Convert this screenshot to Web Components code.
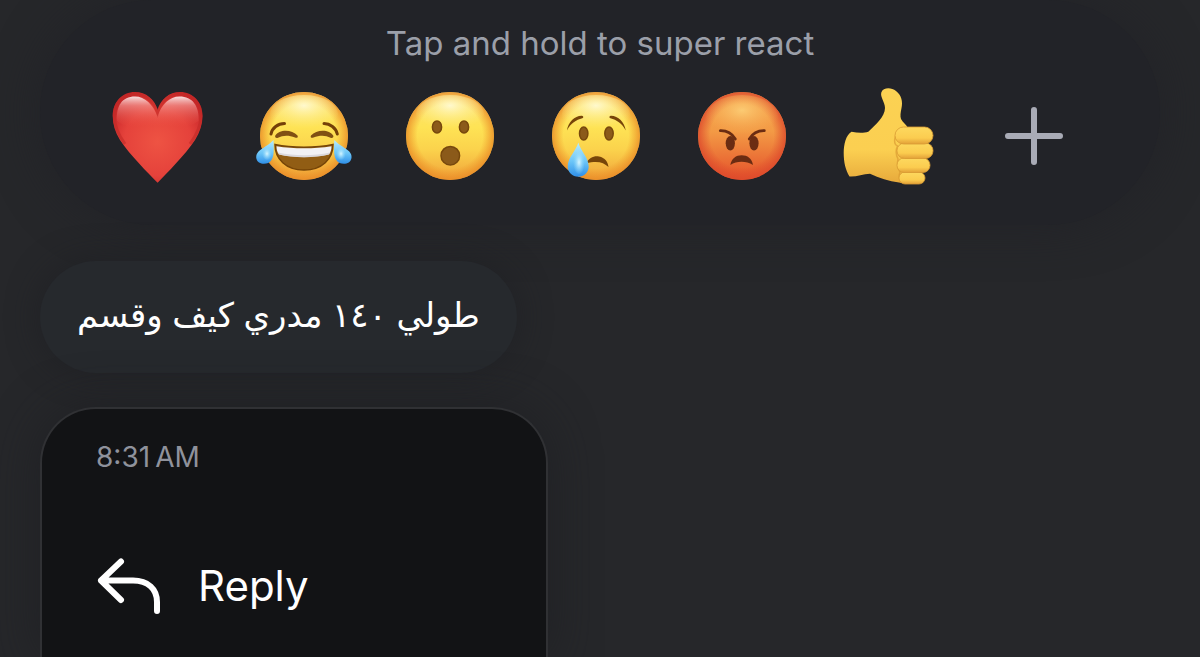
<!DOCTYPE html>
<html lang="en">
<head>
<meta charset="utf-8">
<meta name="viewport" content="width=device-width, initial-scale=1">
<title>Message reactions</title>
<style>
  html, body {
    height: 100%;
  }
  body {
    margin: 0;
    background: #26272a;
    color: #fff;
    font-family: Inter, "DejaVu Sans", sans-serif;
    overflow: hidden;
  }
</style>
</head>
<body>
<message-overlay>
  <reaction-bar slot="reactions" hint="Tap and hold to super react">
    <reaction-button name="heart" label="Love"></reaction-button>
    <reaction-button name="laugh" label="Laugh"></reaction-button>
    <reaction-button name="wow" label="Wow"></reaction-button>
    <reaction-button name="cry" label="Sad"></reaction-button>
    <reaction-button name="angry" label="Angry"></reaction-button>
    <reaction-button name="thumb" label="Like"></reaction-button>
    <reaction-button name="plus" label="More reactions"></reaction-button>
  </reaction-bar>
  <message-bubble lang="ar" dir="rtl">طولي ١٤٠ مدري كيف وقسم</message-bubble>
  <action-menu time="8:31&#8239;AM">
    <action-item>Reply</action-item>
  </action-menu>
</message-overlay>

<script>
// gradients shared by the round faces; ids are local to each shadow root
const faceDefs = `
  <defs>
    <linearGradient id="skin" x1="0" y1="0" x2="0" y2="1">
      <stop offset="0" stop-color="#fde27a"/>
      <stop offset=".4" stop-color="#fee355"/>
      <stop offset=".65" stop-color="#fbd34c"/>
      <stop offset="1" stop-color="#f0a23a"/>
    </linearGradient>
    <radialGradient id="rim" cx=".5" cy=".5" r=".5">
      <stop offset=".74" stop-color="#ee8f22" stop-opacity="0"/>
      <stop offset="1" stop-color="#e98a26" stop-opacity=".8"/>
    </radialGradient>
    <radialGradient id="gloss" cx=".5" cy=".28" r=".6">
      <stop offset="0" stop-color="#fffbd8" stop-opacity=".9"/>
      <stop offset=".45" stop-color="#fff6b0" stop-opacity=".5"/>
      <stop offset="1" stop-color="#fff08a" stop-opacity="0"/>
    </radialGradient>
    <linearGradient id="tear" x1="0" y1="0" x2="0" y2="1">
      <stop offset="0" stop-color="#b8ecff"/>
      <stop offset=".55" stop-color="#6cc6f8"/>
      <stop offset="1" stop-color="#2f8fe8"/>
    </linearGradient>
    <radialGradient id="shine" cx=".5" cy=".55" r=".5">
      <stop offset="0" stop-color="#d8f6ff"/>
      <stop offset="1" stop-color="#8bd8fc" stop-opacity="0"/>
    </radialGradient>
  </defs>`;

const face = `${faceDefs}
  <circle cx="50" cy="49" r="44" fill="url(#skin)"/>
  <circle cx="50" cy="49" r="44" fill="url(#rim)"/>
  <ellipse cx="50" cy="27" rx="34" ry="19" fill="url(#gloss)"/>`;

const glyphs = {
  heart: `
    <defs>
      <radialGradient id="red" cx=".5" cy=".55" r=".62">
        <stop offset="0" stop-color="#ee5343"/>
        <stop offset=".6" stop-color="#e5423b"/>
        <stop offset="1" stop-color="#c42427"/>
      </radialGradient>
      <linearGradient id="top" x1="0" y1="0" x2="0" y2="1">
        <stop offset="0" stop-color="#fff" stop-opacity=".85"/>
        <stop offset=".3" stop-color="#f7a5a0" stop-opacity=".6"/>
        <stop offset="1" stop-color="#ee5343" stop-opacity="0"/>
      </linearGradient>
    </defs>
    <path fill="url(#red)" d="M49.600 95.700C40 86 22 68 12 53 7 45 4.700 37 4.700 29 4.700 15 14 5 27 5c11 0 19.500 7 22.600 18C53 12 61 5 72 5c13 0 22.500 10 22.500 24 0 8-2.500 16-7.500 24C77 68 59 86 49.600 95.700Z"/>
    <path fill="none" stroke="#c22a26" stroke-width="3" opacity=".6" d="M17 57C9 46 6.300 37 6.300 29 6.300 16 15 7 27 7c11 0 19 8 22.600 19C53 15 61 7 72 7c12 0 21 9 21 22 0 8-3 17-11 28"/>
    <path fill="url(#top)" d="M9 34C8 19 14 9.500 27 9.500c10 0 18 8 22.500 20 4-12 12-20 22-20 13 0 20 9.500 19 24.500-12 9-25 5-41.500 5S20 43 9 34Z"/>`,

  laugh: `${face}
    <g fill="none" stroke="#744008" stroke-width="3" stroke-linecap="round">
      <path d="M17 47C18 41 24 36.500 30.500 36.500"/>
      <path d="M83.300 47C82 41 76 36.500 70 36.500"/>
    </g>
    <path fill="#805013" d="M21.300 48.500C25 42 38 42 43.500 48.500c1 1.700-.5 3-2.500 2-6-2.500-12-2.500-17 .2-2 .8-3.500-.7-2.700-2.200Z"/>
    <path fill="#805013" d="M57 48.500c5.500-6.500 18.500-6.500 22.200 0 .8 1.500-.7 3-2.700 2.200-5-2.700-11-2.700-17-.2-2 1-3.500-.3-2.500-2Z"/>
    <path fill="#915d14" stroke="#754407" stroke-width="1.500" d="M21 57.500C38 61 62 61 79 57.500 79 72 68 83 50 83S21 72 21 57.500Z"/>
    <path fill="#f2f1f3" d="M22.500 59.300C40 62 60 62 77.500 59.300c0 3-.8 6-2.500 8.200C60 71 40 71 25 67.500c-1.700-2.200-2.500-5.200-2.500-8.200Z"/>
    <path fill="#ccc8cd" opacity=".6" d="M24 65.500c16 3.500 36 3.500 52 0l-1 2C60 71 40 71 25 67.500Z"/>
    <path fill="url(#tear)" d="M19.500 53C20 64 20 69 17.500 73 15 77 9 78 5 75.500 1.500 73 1.300 68 4.500 64.500 8 61 15 58 19.500 53Z"/>
    <path fill="url(#tear)" d="M80.300 53c-.5 11-.5 16 2 20 2.500 4 8.500 5 12.500 2.500 3.500-2.500 3.700-7.500.5-11C91.800 61 84.800 58 80.300 53Z"/>
    <ellipse cx="13" cy="66" rx="5" ry="7" fill="url(#shine)"/>
    <ellipse cx="87" cy="66" rx="5" ry="7" fill="url(#shine)"/>`,

  wow: `${face}
    <g fill="#8b5a1a" stroke="#77480d" stroke-width="1.500">
      <ellipse cx="37" cy="40" rx="4.600" ry="6"/>
      <ellipse cx="64" cy="40" rx="4.600" ry="6"/>
      <circle cx="50.300" cy="68.700" r="9.300"/>
    </g>`,

  cry: `${face}
    <g fill="#8b5a1a" stroke="#77480d" stroke-width="1.500">
      <ellipse cx="37.700" cy="46.500" rx="4.200" ry="6.600"/>
      <ellipse cx="63" cy="46.500" rx="4.200" ry="6.600"/>
    </g>
    <g fill="#774509">
      <path d="M21 43.500C22 35 29 28.500 36 28.800c1.700.3 1.700 2 .3 2.500C30 33 25 36 21 43.500Z"/>
      <path d="M79.700 43.500C78.700 35 71.700 28.500 64.700 28.800c-1.700.3-1.700 2-.3 2.500 6.300 1.700 11.300 4.700 15.300 12.200Z"/>
      <path d="M40 76.500C43 71 48 68.500 53 69.500c6 1.200 9 5.500 9.500 10.500-5-4.500-11-6.500-22.500-3.500Z"/>
    </g>
    <path fill="url(#tear)" d="M32.300 55.500c2 8 10.400 15 10.400 24 0 6-4.500 10.200-10.400 10.200s-10.600-4.200-10.600-10.200c0-9 8.600-16 10.600-24Z"/>
    <ellipse cx="33" cy="74" rx="6" ry="13" fill="url(#shine)"/>`,

  angry: `
    <defs>
      <linearGradient id="hot" x1="0" y1="0" x2="0" y2="1">
        <stop offset="0" stop-color="#f6a850"/>
        <stop offset=".45" stop-color="#f39a45"/>
        <stop offset="1" stop-color="#e4502a"/>
      </linearGradient>
      <radialGradient id="edge" cx=".5" cy=".5" r=".5">
        <stop offset=".72" stop-color="#dd4a2c" stop-opacity="0"/>
        <stop offset="1" stop-color="#dd4a2c" stop-opacity=".85"/>
      </radialGradient>
      <radialGradient id="glow" cx=".5" cy=".35" r=".55">
        <stop offset="0" stop-color="#fdd27a" stop-opacity=".85"/>
        <stop offset="1" stop-color="#f7b055" stop-opacity="0"/>
      </radialGradient>
    </defs>
    <circle cx="50" cy="49" r="44" fill="url(#hot)"/>
    <circle cx="50" cy="49" r="44" fill="url(#edge)"/>
    <ellipse cx="50" cy="30" rx="36" ry="22" fill="url(#glow)"/>
    <g fill="#6b2c12">
      <ellipse cx="38.300" cy="56.300" rx="4.600" ry="7.200"/>
      <ellipse cx="62" cy="56.300" rx="4.600" ry="7.200"/>
      <path d="M38.300 78C39.500 71.500 44 68.300 49.700 68.300S60 71.500 61 78C54 73.800 45 73.800 38.300 78Z"/>
    </g>
    <g fill="none" stroke="#6b2c12" stroke-width="2.800" stroke-linecap="round">
      <path d="M28.300 43.700C36 43.500 40 46.500 43.300 52"/>
      <path d="M72.300 43.700C64.600 43.500 60.600 46.500 57.300 52"/>
    </g>`,

  thumb: `
    <defs>
      <linearGradient id="hand" x1="0" y1="0" x2="0" y2="1">
        <stop offset="0" stop-color="#fbd253"/>
        <stop offset=".65" stop-color="#fbcf51"/>
        <stop offset="1" stop-color="#e7a93b"/>
      </linearGradient>
      <linearGradient id="finger" x1="0" y1="0" x2="0" y2="1">
        <stop offset="0" stop-color="#fdd95f"/>
        <stop offset=".65" stop-color="#fbcc4f"/>
        <stop offset="1" stop-color="#e2a038"/>
      </linearGradient>
    </defs>
    <path fill="url(#hand)" d="M13.500 44.700C20 46 26 46 30.300 44.700 37 38 47 30 47 21 47 15 42 10 43.300 5.500 45 .5 53 0 58 4c5.500 4 7 11 5.500 17-1 5-1.500 8-.5 11 2 4 5 5 7 9l4 52c-3 3-8 4-13 2.500C51 94 41 91 32 86.700 25 87 18 90 11.500 89.500 7.500 83 5.700 75 5.700 66S8 48 13.500 44.700Z"/>
    <path fill="none" stroke="#d9982f" stroke-width="1.500" opacity=".65" d="M57.500 49c-1.500 5-1 9 2 10-2 4-1.500 9 .5 13-1 5-.5 9 2 13-1.500 4-1 7 1 10"/>
    <g fill="url(#finger)" stroke="#d89a32" stroke-width=".8">
      <rect x="61" y="85" width="26" height="12" rx="6"/>
      <rect x="59" y="71" width="33" height="14.500" rx="7"/>
      <rect x="59" y="56" width="36" height="15.500" rx="7.500"/>
      <rect x="57" y="40" width="38" height="17" rx="8.500"/>
    </g>`,

  plus: `
    <path fill="none" stroke="#a9abb6" stroke-width="6" stroke-linecap="round" d="M50 23v52M24 49h52"/>`
};

class MessageOverlay extends HTMLElement {
  constructor() {
    super();
    this.attachShadow({ mode: "open" }).innerHTML = `
      <style>
        :host {
          display: flex;
          flex-direction: column;
          box-sizing: border-box;
          min-height: 100vh;
          padding: 0 40px;
        }
        .thread {
          flex: 1;
          display: flex;
          flex-direction: column;
          align-items: flex-start;
          gap: 34px;
          padding-top: 36px;
        }
      </style>
      <slot name="reactions"></slot>
      <div class="thread"><slot></slot></div>
    `;
  }
}

class ReactionBar extends HTMLElement {
  constructor() {
    super();
    this.attachShadow({ mode: "open" }).innerHTML = `
      <style>
        :host {
          display: block;
          box-sizing: border-box;
          padding: 24px 0 38px;
          border-radius: 112px;
          background: #222328;
          box-shadow: 0 0 48px #222328;
        }
        p {
          margin: 0;
          font-size: 33px;
          line-height: 38px;
          text-align: center;
          color: #9b9fa9;
        }
        .row {
          display: grid;
          grid-template-columns: repeat(7, 1fr);
          justify-items: center;
          padding: 25px 53px 0 45px;
        }
      </style>
      <p></p>
      <div class="row"><slot></slot></div>
    `;
  }

  connectedCallback() {
    this.shadowRoot.querySelector("p").textContent = this.getAttribute("hint") ?? "";
  }
}

class ReactionButton extends HTMLElement {
  constructor() {
    super();
    this.attachShadow({ mode: "open" }).innerHTML = `
      <style>
        :host {
          display: block;
        }
        button {
          display: block;
          padding: 0;
          border: 0;
          background: none;
          cursor: pointer;
        }
        svg {
          display: block;
          width: 100px;
          height: 100px;
        }
      </style>
      <button type="button"><svg viewBox="0 0 100 100" aria-hidden="true"></svg></button>
    `;
  }

  connectedCallback() {
    this.shadowRoot.querySelector("button").setAttribute("aria-label", this.getAttribute("label"));
    this.shadowRoot.querySelector("svg").innerHTML = glyphs[this.getAttribute("name")];
  }
}

class MessageBubble extends HTMLElement {
  constructor() {
    super();
    this.attachShadow({ mode: "open" }).innerHTML = `
      <style>
        :host {
          display: block;
          padding: 30px 37px 34px;
          border-radius: 56px;
          background: #26292d;
          box-shadow: 0 0 32px rgba(30, 31, 35, .7);
          font-size: 34px;
          line-height: 48px;
          white-space: nowrap;
        }
      </style>
      <slot></slot>
    `;
  }
}

class ActionMenu extends HTMLElement {
  constructor() {
    super();
    this.attachShadow({ mode: "open" }).innerHTML = `
      <style>
        :host {
          flex: 1;
          box-sizing: border-box;
          display: block;
          width: 508px;
          max-width: 100%;
          padding: 32px 54px;
          border: 2px solid #303134;
          border-bottom: 0;
          border-radius: 56px 56px 0 0;
          background: #121315;
          box-shadow: 0 0 48px rgba(30, 31, 35, .8);
        }
        time {
          display: block;
          margin-bottom: 84px;
          font-size: 28px;
          line-height: 32px;
          color: #8f929c;
        }
      </style>
      <time></time>
      <slot></slot>
    `;
  }

  connectedCallback() {
    this.shadowRoot.querySelector("time").textContent = this.getAttribute("time");
  }
}

class ActionItem extends HTMLElement {
  constructor() {
    super();
    this.attachShadow({ mode: "open" }).innerHTML = `
      <style>
        :host {
          display: block;
        }
        button {
          display: flex;
          align-items: center;
          gap: 38px;
          width: 100%;
          padding: 0;
          border: 0;
          background: none;
          color: inherit;
          font: inherit;
          font-size: 42px;
          line-height: 58px;
          cursor: pointer;
        }
        svg {
          width: 64px;
          height: 58px;
        }
      </style>
      <button type="button">
        <svg viewBox="0 0 64 58" fill="none" stroke="#fff" stroke-width="6" stroke-linecap="round" stroke-linejoin="round" aria-hidden="true">
          <path d="M25 4.500 5 23.500 25 43M5 23.500H37C52 23.500 61 32 61 45v9"/>
        </svg>
        <slot></slot>
      </button>
    `;
  }
}

customElements.define("message-overlay", MessageOverlay);
customElements.define("reaction-bar", ReactionBar);
customElements.define("reaction-button", ReactionButton);
customElements.define("message-bubble", MessageBubble);
customElements.define("action-menu", ActionMenu);
customElements.define("action-item", ActionItem);
</script>
</body>
</html>
